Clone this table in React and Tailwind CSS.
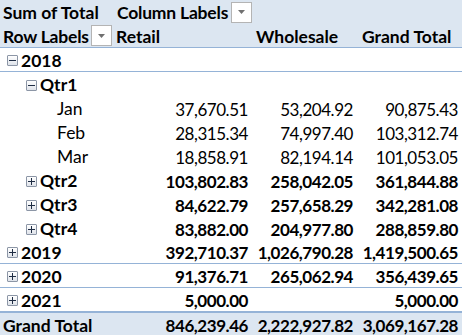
import React from 'react';

const rows = [
  { label: '2018', level: 0, toggle: 'minus', bold: true, vals: ['', '', ''], line: true },
  { label: 'Qtr1', level: 1, toggle: 'minus', bold: true, vals: ['', '', ''] },
  { label: 'Jan', level: 2, vals: ['37,670.51', '53,204.92', '90,875.43'] },
  { label: 'Feb', level: 2, vals: ['28,315.34', '74,997.40', '103,312.74'] },
  { label: 'Mar', level: 2, vals: ['18,858.91', '82,194.14', '101,053.05'] },
  { label: 'Qtr2', level: 1, toggle: 'plus', bold: true, vals: ['103,802.83', '258,042.05', '361,844.88'] },
  { label: 'Qtr3', level: 1, toggle: 'plus', bold: true, vals: ['84,622.79', '257,658.29', '342,281.08'] },
  { label: 'Qtr4', level: 1, toggle: 'plus', bold: true, vals: ['83,882.00', '204,977.80', '288,859.80'] },
  { label: '2019', level: 0, toggle: 'plus', bold: true, vals: ['392,710.37', '1,026,790.28', '1,419,500.65'], line: true },
  { label: '2020', level: 0, toggle: 'plus', bold: true, vals: ['91,376.71', '265,062.94', '356,439.65'], line: true },
  { label: '2021', level: 0, toggle: 'plus', bold: true, vals: ['5,000.00', '', '5,000.00'], line: true },
];

const indent = ['pl-[7px]', 'pl-[26px]', 'pl-[57px]'];

const Toggle = ({ type }) => (
  <span className="w-[11px] h-[11px] mr-[3px] shrink-0 border border-[#8c96a6] rounded-[1px] bg-gradient-to-b from-white to-[#dfe3ea] flex items-center justify-center">
    <svg width="7" height="7" viewBox="0 0 7 7">
      <rect x="0" y="3" width="7" height="1" fill="#1f2d44" />
      {type === 'plus' && <rect x="3" y="0" width="1" height="7" fill="#1f2d44" />}
    </svg>
  </span>
);

const Dropdown = () => (
  <span className="w-[21px] h-[21px] shrink-0 border border-[#b4b4b4] bg-white flex items-center justify-center">
    <svg width="7" height="4" viewBox="0 0 7 4">
      <path d="M0 0h7L3.5 4z" fill="#707070" />
    </svg>
  </span>
);

const grid = 'grid grid-cols-[114px_138px_105px_105px] h-6 box-border';
const num = 'flex items-center justify-end pr-[4px] pt-[2px] text-[17px] tracking-[-0.45px]';

export default function App() {
  return (
    <div
      className="w-[462px] h-[335px] overflow-hidden bg-white text-black text-[17.5px] leading-none"
      style={{ fontFamily: 'Lato, "Open Sans", sans-serif' }}
    >
      <div className={`${grid} bg-[#dce6f1] font-bold`}>
        <div className="flex items-center pl-[3px] pt-[2px]">Sum of Total</div>
        <div className="flex items-center pl-[3px] col-span-3">
          <div className="flex items-center gap-[3px]">
            <span className="pt-[2px] tracking-[-0.2px]">Column Labels</span>
            <Dropdown />
          </div>
        </div>
      </div>
      <div className={`${grid} bg-[#dce6f1] font-bold border-b border-[#95b3d7]`}>
        <div className="flex items-center justify-between pl-[3px] pr-[2px]">
          <span className="pt-[2px] tracking-[-0.2px]">Row Labels</span>
          <Dropdown />
        </div>
        <div className="flex items-center pl-[2px] pt-[2px]">Retail</div>
        <div className="flex items-center pl-[4px] pt-[2px]">Wholesale</div>
        <div className="flex items-center pl-[5px] pt-[2px]">Grand Total</div>
      </div>
      {rows.map((r) => (
        <div key={r.label} className={`${grid} ${r.bold ? 'font-bold' : ''} ${r.line ? 'border-b border-[#95b3d7]' : ''}`}>
          <div className={`flex items-center pt-[2px] ${indent[r.level]}`}>
            {r.toggle && <Toggle type={r.toggle} />}
            <span>{r.label}</span>
          </div>
          {r.vals.map((v, i) => (
            <div key={i} className={num}>{v}</div>
          ))}
        </div>
      ))}
      <div className={`${grid} bg-[#dce6f1] font-bold border-t border-[#95b3d7]`}>
        <div className="flex items-center pl-[3px] pt-[2px]">Grand Total</div>
        {['846,239.46', '2,222,927.82', '3,069,167.28'].map((v) => (
          <div key={v} className={num}>{v}</div>
        ))}
      </div>
    </div>
  );
}
